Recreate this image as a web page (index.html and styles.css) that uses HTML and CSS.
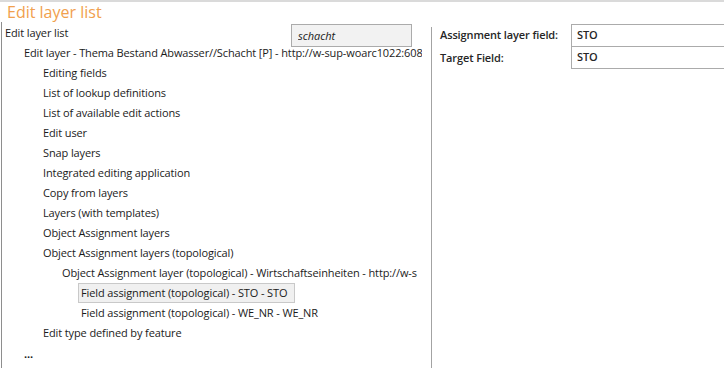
FILE: index.html
```html
<!DOCTYPE html>
<html lang="en">
<head>
    <meta charset="UTF-8">
    <title>Edit layer list</title>
    <link rel="stylesheet" href="styles.css">
</head>
<body>

    <div class="window">
        <h1 class="title">Edit layer list</h1>

        <div class="frame">
            <div class="left-panel">
                <div class="list-head">
                    <span class="row-text">Edit layer list</span>
                    <input type="text" class="search-input" value="schacht">
                </div>

                <div class="tree">
                    <div class="tree-row level-1">Edit layer - Thema Bestand Abwasser//Schacht [P] - http://w-sup-woarc1022:608</div>
                    <div class="tree-row level-2">Editing fields</div>
                    <div class="tree-row level-2">List of lookup definitions</div>
                    <div class="tree-row level-2">List of available edit actions</div>
                    <div class="tree-row level-2">Edit user</div>
                    <div class="tree-row level-2">Snap layers</div>
                    <div class="tree-row level-2">Integrated editing application</div>
                    <div class="tree-row level-2">Copy from layers</div>
                    <div class="tree-row level-2">Layers (with templates)</div>
                    <div class="tree-row level-2">Object Assignment layers</div>
                    <div class="tree-row level-2">Object Assignment layers (topological)</div>
                    <div class="tree-row level-3">Object Assignment layer (topological) - Wirtschaftseinheiten - http://w-s</div>
                    <div class="tree-row level-4"><span class="selected">Field assignment (topological) - STO - STO</span></div>
                    <div class="tree-row level-4">Field assignment (topological) - WE_NR - WE_NR</div>
                    <div class="tree-row level-2">Edit type defined by feature</div>
                    <div class="tree-row level-1 more">...</div>
                </div>
            </div>

            <div class="divider"></div>

            <div class="right-panel">
                <div class="field-grid">
                    <label class="field-label">Assignment layer field:</label>
                    <div class="field-box">STO</div>
                    <label class="field-label">Target Field:</label>
                    <div class="field-box second">STO</div>
                </div>
            </div>
        </div>
    </div>

</body>
</html>
```

FILE: styles.css
```css
body {
    margin: 0;
    font-family: "Open Sans", "Noto Sans", sans-serif;
    font-size: 11px;
    letter-spacing: -0.12px;
    color: #1b1b1b;
    background: #fff;
    overflow: hidden;
}
.window {
    height: 368px;
    display: flex;
    flex-direction: column;
    border-top: 2px solid #dadada;
    box-sizing: border-box;
}
.title {
    margin: 0;
    padding-left: 7px;
    height: 20px;
    line-height: 20px;
    font-size: 16px;
    font-weight: normal;
    letter-spacing: 0;
    color: #f1a04d;
}
.frame {
    flex: 1;
    display: flex;
    margin-left: 1px;
    border-left: 1px solid #8e8e8e;
    min-height: 0;
}
.left-panel {
    width: 420px;
    padding-top: 1px;
    overflow: hidden;
}

/* header row with search box */
.list-head {
    display: flex;
    height: 20px;
    align-items: flex-start;
}
.row-text {
    width: 286px;
    padding-left: 3px;
    line-height: 20px;
    white-space: nowrap;
}
.search-input {
    margin-top: 1px;
    width: 121px;
    height: 23px;
    box-sizing: border-box;
    border: 1px solid #ababab;
    background: #f2f2f2;
    padding: 0 6px;
    font-family: inherit;
    font-size: 11px;
    font-style: italic;
    color: #1b1b1b;
    outline: none;
}

/* tree */
.tree-row {
    height: 20px;
    line-height: 20px;
    white-space: nowrap;
}
.level-1 { padding-left: 22px; }
.level-2 { padding-left: 41px; }
.level-3 { padding-left: 60px; }
.level-4 { padding-left: 79px; }
.selected {
    display: inline-block;
    margin-left: -3px;
    padding: 0 7px 0 2px;
    height: 18px;
    line-height: 18px;
    background: #f0f0f0;
    border: 1px solid #c9c9c9;
}
.more {
    padding-top: 1px;
    font-weight: bold;
}

.divider {
    margin-left: 9px;
    margin-top: 5px;
    width: 1px;
    background: #a3a3a3;
}

/* right side fields */
.right-panel {
    flex: 1;
    padding: 2px 0 0 8px;
    overflow: hidden;
}
.field-grid {
    display: grid;
    grid-template-columns: 131px 1fr;
    margin-right: -3px;
}
.field-label {
    font-weight: 600;
    line-height: 21px;
    height: 21px;
    color: #262626;
}
.field-box {
    height: 21px;
    line-height: 20px;
    border: 1px solid #ababab;
    padding-left: 5px;
    font-weight: 600;
    color: #262626;
}
.field-box.second {
    border-top: none;
}
```
